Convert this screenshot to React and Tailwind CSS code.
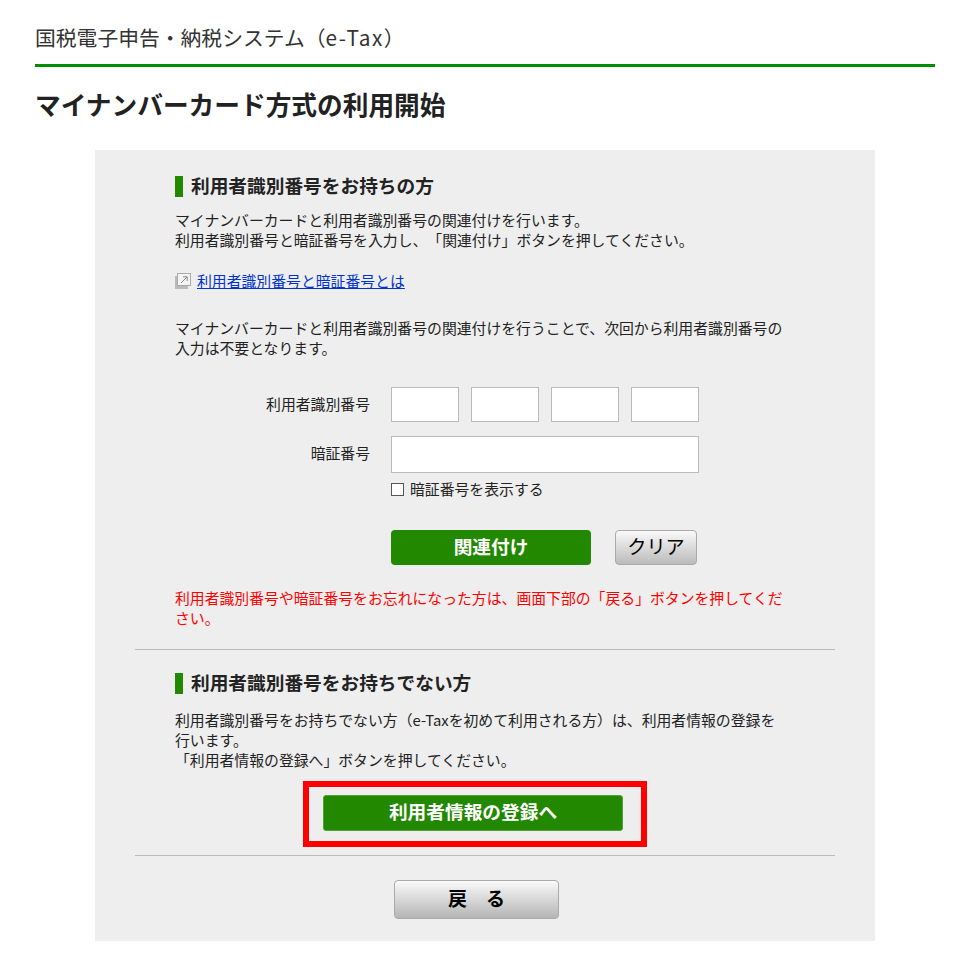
function Heading({ children }) {
  return (
    <h2 className="flex items-center h-[21px] border-l-[8px] border-[#228800] pl-2 pb-[5px] text-[18.7px] font-bold leading-[21px] text-[#222222]">
      {children}
    </h2>
  );
}
function LinkIcon() {
  return (
    <svg width="16" height="16" viewBox="0 0 16 16" className="shrink-0">
      <rect x="0" y="3" width="13" height="13" fill="#bbbbbb" />
      <rect x="2.5" y="0.5" width="13" height="12" fill="#f4f4f4" stroke="#aaaaaa" />
      <path d="M6 10 L12 4 M8 3.8 H12.2 V8" fill="none" stroke="#888888" strokeWidth="1" />
    </svg>
  );
}
function Box({ className = "" }) {
  return <input type="text" className={"block bg-white border border-[#bbbbbb] " + className} />;
}
export default function App() {
  return (
    <div className="bg-white w-[963px] h-[964px] pl-[35px] pr-[28px] pt-[22px] text-[#222222] font-['Noto_Sans_CJK_JP','Noto_Sans',sans-serif] overflow-hidden [text-spacing-trim:space-all] [font-feature-settings:'chws'_0]">
      <div className="h-[45px] border-b-[3px] border-[#008f00] text-[20.8px] leading-[30px] text-[#333333]">国税電子申告・納税システム（<span className="tracking-[1.5px]">e-Tax</span>）</div>
      <h1 className="mt-[19px] text-[25.7px] leading-[36px] font-bold text-[#222222]">マイナンバーカード方式の利用開始</h1>
      <div className="mt-[28px] ml-[60px] w-[780px] h-[791px] bg-[#eeeeee] px-[40px] pt-[26px]">
        <div className="px-[40px] text-[14.85px] leading-[20px]">
          <Heading>利用者識別番号をお持ちの方</Heading>
          <p className="mt-[13px]">マイナンバーカードと利用者識別番号の関連付けを行います。<br />利用者識別番号と暗証番号を入力し、「関連付け」ボタンを押してください。</p>
          <div className="mt-[21px] flex items-center gap-[6px] h-[20px]">
            <LinkIcon />
            <a href="#" className="text-[#0033cc] underline">利用者識別番号と暗証番号とは</a>
          </div>
          <p className="mt-[27px] w-[620px]">マイナンバーカードと利用者識別番号の関連付けを行うことで、次回から利用者識別番号の入力は不要となります。</p>
          <div className="mt-[29px] flex items-center">
            <div className="w-[195px] text-right pb-[2px]">利用者識別番号</div>
            <div className="ml-[21px] flex gap-3">
              <Box className="w-[68px] h-[35px]" />
              <Box className="w-[68px] h-[35px]" />
              <Box className="w-[68px] h-[35px]" />
              <Box className="w-[68px] h-[35px]" />
            </div>
          </div>
          <div className="mt-[14px] flex items-center">
            <div className="w-[195px] text-right pb-[3px]">暗証番号</div>
            <Box className="ml-[21px] w-[308px] h-[37px]" />
          </div>
          <div className="mt-[6px] ml-[216px] flex items-center gap-[6px] h-[20px]">
            <span className="block w-[13px] h-[13px] bg-white border border-[#555555]"></span>
            <span>暗証番号を表示する</span>
          </div>
          <div className="mt-[31px] ml-[216px] flex gap-6">
            <button className="w-[200px] h-[35px] pb-[3px] rounded-[4px] bg-[#228800] text-white font-bold text-[18.7px] leading-none">関連付け</button>
            <button className="w-[82px] h-[35px] pb-[1px] rounded-[4px] border border-[#aaaaaa] bg-gradient-to-b from-[#fafafa] to-[#bbbbbb] text-black text-[19.2px] leading-none">クリア</button>
          </div>
          <p className="mt-[23px] text-[#ff0000] w-[620px]">利用者識別番号や暗証番号をお忘れになった方は、画面下部の「戻る」ボタンを押してください。</p>
        </div>
        <hr className="mt-[21px] border-t border-[#bbbbbb]" />
        <div className="px-[40px] pt-[23px] text-[14.85px] leading-[20px]">
          <Heading>利用者識別番号をお持ちでない方</Heading>
          <p className="mt-[16px] w-[610px]">利用者識別番号をお持ちでない方（e-Taxを初めて利用される方）は、利用者情報の登録を行います。<br />「利用者情報の登録へ」ボタンを押してください。</p>
        </div>
        <div className="mt-[25px] flex justify-center">
          <div className="relative ml-[-24px]">
            <button className="block w-[300px] h-[36px] pb-[3px] rounded-[3px] bg-[#228800] border border-[#55a030] text-white font-bold text-[18.7px] leading-none">利用者情報の登録へ</button>
            <div className="absolute left-[-20px] right-[-24px] top-[-14px] bottom-[-16px] border-[6px] border-[#ff0000]"></div>
          </div>
        </div>
        <hr className="mt-[24px] border-t border-[#bbbbbb]" />
        <div className="mt-[24px] flex justify-center">
          <button className="mr-[17px] w-[165px] h-[39px] pb-[5px] rounded-[4px] border border-[#aaaaaa] bg-gradient-to-b from-[#fafafa] to-[#b5b5b5] text-black font-bold text-[19px] leading-none">戻　る</button>
        </div>
      </div>
    </div>
  );
}
